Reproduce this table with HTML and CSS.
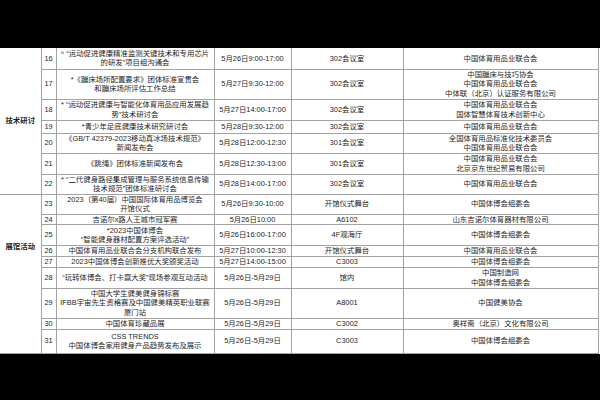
FILE: index.html
```html
<!DOCTYPE html>
<html lang="zh-CN">
<head>
<meta charset="utf-8">
<title>日程表</title>
<link rel="stylesheet" href="styles.css">
</head>
<body>
<div class="page">
  <div class="bar-top"></div>
  <table class="sched">
    <colgroup>
      <col class="c-cat"><col class="c-num"><col class="c-event"><col class="c-time"><col class="c-venue"><col class="c-org">
    </colgroup>
    <tbody>
      <tr class="h21">
        <td class="cat" rowspan="7">技术研讨</td>
        <td>16</td>
        <td>^ “运动促进健康精准监测关键技术和专用芯片<br>的研发”项目组沟通会</td>
        <td>5月26日9:00-17:00</td>
        <td>302会议室</td>
        <td>中国体育用品业联合会</td>
      </tr>
      <tr class="h30">
        <td>17</td>
        <td>*《蹦床场所配置要求》团体标准宣贯会<br>和蹦床场所评估工作总结</td>
        <td>5月27日9:30-12:00</td>
        <td>302会议室</td>
        <td>中国蹦床与技巧协会<br>中国体育用品业联合会<br>中体联（北京）认证服务有限公司</td>
      </tr>
      <tr class="h21">
        <td>18</td>
        <td>* “运动促进健康与智能化体育用品应用发展趋<br>势”技术研讨会</td>
        <td>5月27日14:00-17:00</td>
        <td>302会议室</td>
        <td>中国体育用品业联合会<br>国体智慧体育技术创新中心</td>
      </tr>
      <tr class="h13">
        <td>19</td>
        <td>*青少年足底健康技术研究研讨会</td>
        <td>5月28日9:30-12:00</td>
        <td>302会议室</td>
        <td>中国体育用品业联合会</td>
      </tr>
      <tr class="h20">
        <td>20</td>
        <td>《GB/T 42379-2023移动真冰场技术规范》<br>新闻发布会</td>
        <td>5月28日12:00-12:30</td>
        <td>301会议室</td>
        <td>全国体育用品标准化技术委员会<br>中国体育用品业联合会</td>
      </tr>
      <tr class="h21">
        <td>21</td>
        <td>《跳绳》团体标准新闻发布会</td>
        <td>5月28日12:30-13:00</td>
        <td>301会议室</td>
        <td>中国体育用品业联合会<br>北京京东世纪贸易有限公司</td>
      </tr>
      <tr class="h20">
        <td>22</td>
        <td>* “二代健身路径集成管理与服务系统信息传输<br>技术规范”团体标准研讨会</td>
        <td>5月28日14:00-17:00</td>
        <td>302会议室</td>
        <td>中国体育用品业联合会</td>
      </tr>
      <tr class="h20">
        <td class="cat cat-low" rowspan="9">展馆活动</td>
        <td>23</td>
        <td>2023（第40届）中国国际体育用品博览会<br>开馆仪式</td>
        <td>5月26日9:30-10:00</td>
        <td>开馆仪式舞台</td>
        <td>中国体博会组委会</td>
      </tr>
      <tr class="h10">
        <td>24</td>
        <td>吉诺尔x路人王城市冠军赛</td>
        <td>5月26日10:00</td>
        <td>A6102</td>
        <td>山东吉诺尔体育器材有限公司</td>
      </tr>
      <tr class="h21">
        <td>25</td>
        <td>*2023中国体博会<br>“智能健身器材配置方案评选活动”</td>
        <td>5月26日16:00-17:00</td>
        <td>4F观海厅</td>
        <td>中国体博会组委会</td>
      </tr>
      <tr class="h11">
        <td>26</td>
        <td>中国体育用品业联合会分支机构联合发布</td>
        <td>5月27日10:00-12:30</td>
        <td>开馆仪式舞台</td>
        <td>中国体育用品业联合会</td>
      </tr>
      <tr class="h10">
        <td>27</td>
        <td>2023中国体博会创新推优大奖颁奖活动</td>
        <td>5月27日14:00-15:00</td>
        <td>C3003</td>
        <td>中国体博会组委会</td>
      </tr>
      <tr class="h21">
        <td>28</td>
        <td>“玩转体博会、打卡赢大奖”现场参观互动活动</td>
        <td>5月26日-5月29日</td>
        <td>馆内</td>
        <td>中国制造网<br>中国体博会组委会</td>
      </tr>
      <tr class="h30">
        <td>29</td>
        <td>中国大学生健美健身锦标赛<br>IFBB宇宙先生资格赛及中国健美精英职业联赛<br>厦门站</td>
        <td>5月26日-5月29日</td>
        <td>A8001</td>
        <td>中国健美协会</td>
      </tr>
      <tr class="h11">
        <td>30</td>
        <td>中国体育珍藏品展</td>
        <td>5月26日-5月29日</td>
        <td>C3002</td>
        <td>奥祥斋（北京）文化有限公司</td>
      </tr>
      <tr class="h24">
        <td>31</td>
        <td>CSS TRENDS<br>中国体博会家用健身产品趋势发布及展示</td>
        <td>5月26日-5月29日</td>
        <td>C3003</td>
        <td>中国体博会组委会</td>
      </tr>
    </tbody>
  </table>
  <div class="bar-bottom"></div>
</div>
</body>
</html>
```

FILE: styles.css
```css
html, body {
  margin: 0;
  padding: 0;
  background: #ffffff;
}

.page {
  width: 600px;
  height: 400px;
  overflow: hidden;
  display: flex;
  flex-direction: column;
}

.bar-top {
  height: 48px;
  flex: none;
  background: #000000;
}

.bar-bottom {
  flex: 1;
  background: #000000;
}

.sched {
  flex: none;
  table-layout: fixed;
  width: 598px;
  border-collapse: collapse;
  font-family: "Liberation Sans", "Noto Sans CJK SC", sans-serif;
  font-size: 7.4px;
  line-height: 9.5px;
  color: #1e1e1e;
}

.c-cat { width: 41px; }
.c-num { width: 15px; }
.c-event { width: 158px; }
.c-time { width: 77px; }
.c-venue { width: 112px; }
.c-org { width: 195px; }

.sched td {
  border: 1px solid #a3a3a3;
  padding: 0;
  text-align: center;
  vertical-align: middle;
  white-space: nowrap;
  overflow: hidden;
}

.sched tr:first-child td {
  border-top: none;
}

.sched td.cat {
  border-left: none;
  font-weight: bold;
}

.sched td.cat-low {
  padding-bottom: 54px;
}

.h10 { height: 10px; }
.h11 { height: 11px; }
.h13 { height: 13px; }
.h20 { height: 20px; }
.h21 { height: 21px; }
.h24 { height: 24px; }
.h30 { height: 30px; }
```
